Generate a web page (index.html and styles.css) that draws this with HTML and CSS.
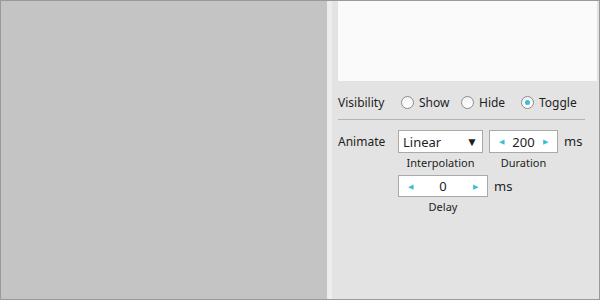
FILE: index.html
```html
<!DOCTYPE html>
<html lang="en">
  <head>
    <meta charset="UTF-8" />
    <title>Animate settings</title>
    <link rel="stylesheet" href="styles.css">
  </head>
  <body>
    <div class="frame">
      <div class="canvas"></div>
      <div class="splitter"></div>

      <div class="panel">
        <div class="preview"></div>

        <div class="row visibility">
          <span class="row-label">Visibility</span>
          <label class="radio"><span class="radio-dot"></span>Show</label>
          <label class="radio"><span class="radio-dot"></span>Hide</label>
          <label class="radio checked"><span class="radio-dot"></span>Toggle</label>
        </div>

        <div class="divider"></div>

        <div class="animate">
          <span class="row-label">Animate</span>

          <div class="field">
            <div class="select">
              <span>Linear</span>
              <span class="caret">&#9660;</span>
            </div>
            <span class="caption">Interpolation</span>
          </div>

          <div class="field">
            <div class="spinner duration">
              <span class="arrow">&#9664;</span>
              <span class="value">200</span>
              <span class="arrow">&#9654;</span>
            </div>
            <span class="caption">Duration</span>
          </div>
          <span class="unit">ms</span>

          <div class="field delay-field">
            <div class="spinner delay">
              <span class="arrow">&#9664;</span>
              <span class="value">0</span>
              <span class="arrow">&#9654;</span>
            </div>
            <span class="caption">Delay</span>
          </div>
          <span class="unit delay-unit">ms</span>
        </div>
      </div>
    </div>
  </body>
</html>
```

FILE: styles.css
```css
:root {
  --frame-border: #9a9a9a;
  --canvas-bg: #c4c4c4;
  --splitter-bg: #ededed;
  --panel-bg: #e3e3e3;
  --preview-bg: #fafafa;
  --field-border: #a9a9a9;
  --text: #1e1e1e;
  --accent: #3bbdd3;
}

* {
  box-sizing: border-box;
  margin: 0;
  padding: 0;
}

body {
  margin: 0;
  font-family: "Noto Sans", "Open Sans", sans-serif;
  font-size: 12px;
  color: var(--text);
}

.frame {
  width: 600px;
  height: 300px;
  border: 1px solid var(--frame-border);
  display: flex;
}

.canvas {
  width: 326px;
  background-color: var(--canvas-bg);
}

.splitter {
  width: 5px;
  background-color: var(--splitter-bg);
}

.panel {
  flex: 1;
  background-color: var(--panel-bg);
  padding: 0 2px 0 6px;
}

.preview {
  height: 80px;
  background-color: var(--preview-bg);
}

.row {
  display: flex;
  align-items: center;
}

.visibility {
  height: 22px;
  margin-top: 10px;
}

.row-label {
  width: 63px;
}

.radio {
  width: 60px;
  display: flex;
  align-items: center;
  gap: 5px;
}

.radio-dot {
  width: 13px;
  height: 13px;
  border-radius: 50%;
  border: 1px solid #8c8c8c;
  background: linear-gradient(#f2f2f2, #ffffff);
  display: flex;
  align-items: center;
  justify-content: center;
}

.checked .radio-dot::after {
  content: "";
  width: 5px;
  height: 5px;
  border-radius: 50%;
  background-color: var(--accent);
}

.divider {
  width: 247px;
  height: 1px;
  margin-top: 6px;
  background-color: #b3b3b3;
}

.animate {
  display: grid;
  grid-template-columns: 60px 85px 6px 69px auto;
  grid-template-rows: auto auto;
  row-gap: 2px;
  margin-top: 10px;
  align-items: start;
}

.animate .row-label {
  line-height: 23px;
}

.field {
  display: flex;
  flex-direction: column;
  align-items: center;
}

.field:nth-of-type(2) {
  grid-column: 4;
}

.select,
.spinner {
  width: 100%;
  height: 23px;
  background-color: #ffffff;
  border: 1px solid var(--field-border);
  display: flex;
  align-items: center;
}

.select {
  justify-content: space-between;
  padding: 0 4px 0 4px;
  font-size: 13px;
}

.caret {
  font-size: 12px;
}

.spinner {
  justify-content: space-between;
  padding: 0 9px;
  font-size: 13px;
}

.arrow {
  color: var(--accent);
  font-size: 7px;
}

.caption {
  font-size: 11px;
  line-height: 20px;
}

.unit {
  grid-column: 5;
  grid-row: 1;
  line-height: 23px;
  padding-left: 6px;
  font-size: 13px;
}

.delay-field {
  grid-column: 2 / span 2;
  grid-row: 2;
  width: 90px;
}

.delay {
  height: 22px;
}

.delay-unit {
  grid-column: 4;
  grid-row: 2;
  line-height: 22px;
  padding-left: 5px;
}
```
